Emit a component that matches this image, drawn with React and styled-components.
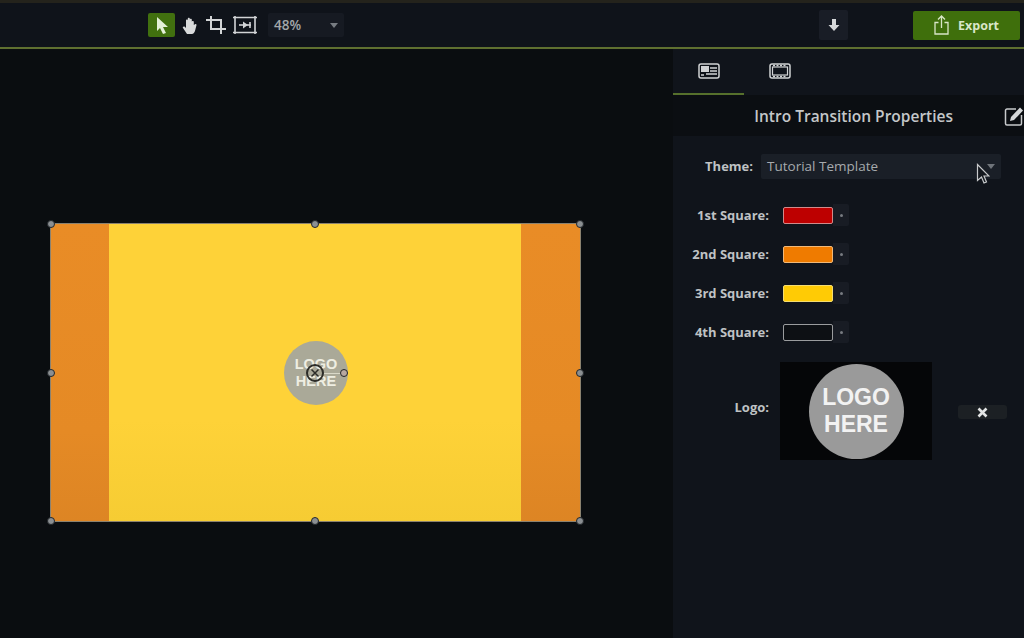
import React from 'react';
import styled, {createGlobalStyle} from 'styled-components';

const GlobalStyle = createGlobalStyle`
  html, body {
    margin: 0;
    padding: 0;
    background: #0a0d10;
    font-family: 'Open Sans', 'Liberation Sans', sans-serif;
  }
`;

const Page = styled.div`
  position: relative;
  width: 1024px;
  height: 638px;
  display: flex;
  flex-direction: column;
  overflow: hidden;
  background: #0a0d10;
  border-top: 3px solid #24231c;
  box-sizing: border-box;
`;

const Toolbar = styled.div`
  height: 46px;
  flex: none;
  box-sizing: border-box;
  display: flex;
  align-items: center;
  background: #0f131a;
  border-bottom: 2px solid #5f7030;
  padding-left: 148px;
  padding-right: 4px;
`;

const ToolGroup = styled.div`
  display: flex;
  align-items: center;
  gap: 7px;
`;

const ToolButton = styled.div`
  width: ${props => props.size || 24}px;
  height: 24px;
  display: flex;
  align-items: center;
  justify-content: center;
  border-radius: 2px;
  background: ${props => (props.active ? '#41700f' : 'transparent')};
`;

const ZoomSelect = styled.div`
  width: 76px;
  height: 24px;
  margin-left: 11px;
  padding: 0 6px;
  box-sizing: border-box;
  display: flex;
  align-items: center;
  justify-content: space-between;
  background: #161a22;
  border-radius: 2px;
  color: #a3a7aa;
  font-size: 13.5px;
  font-weight: 600;
`;

const Caret = styled.span`
  width: 0;
  height: 0;
  border-left: 4px solid transparent;
  border-right: 4px solid transparent;
  border-top: 5px solid #777c82;
`;

const DownloadButton = styled.div`
  width: 29px;
  height: 30px;
  margin-left: auto;
  display: flex;
  align-items: center;
  justify-content: center;
  background: #191d26;
  border-radius: 2px;
`;

const ExportButton = styled.div`
  width: 107px;
  height: 29px;
  margin-left: 65px;
  display: flex;
  align-items: center;
  justify-content: center;
  gap: 9px;
  background: #3f6f0c;
  border-radius: 2px;
  color: #d9e6c8;
  font-size: 12.5px;
  font-weight: 700;
`;

const Main = styled.div`
  flex: 1;
  display: flex;
  min-height: 0;
`;

const Canvas = styled.div`
  width: 673px;
  flex: none;
  padding: 175px 0 0 51px;
  box-sizing: border-box;
  background: #0a0d10;
`;

const Stage = styled.div`
  position: relative;
  width: 529px;
  height: 297px;
  display: flex;
  background: linear-gradient(180deg, #fed238 0%, #fed238 66%, #f6cc33 100%);
  box-shadow: 0 0 0 1px #8b8270;
`;

const SideBar = styled.div`
  width: ${props => props.width}px;
  margin-left: ${props => props.offset || 0}px;
  background: linear-gradient(180deg, #e98c26 0%, #e58a25 70%, #dd8524 100%);
`;

const Handle = styled.span`
  position: absolute;
  left: ${props => props.x}px;
  top: ${props => props.y}px;
  width: 8px;
  height: 8px;
  margin: -4px 0 0 -4px;
  box-sizing: border-box;
  border-radius: 50%;
  background: ${props => props.fill || '#8b8f92'};
  border: 1.5px solid #22262a;
`;

const StageLogo = styled.div`
  position: absolute;
  left: 233px;
  top: 117px;
  width: 64px;
  height: 64px;
  display: flex;
  align-items: center;
  justify-content: center;
  border-radius: 50%;
  background: #aaa998;
  color: #eeeee2;
  font-family: 'Liberation Sans', sans-serif;
  font-size: 14.5px;
  font-weight: 700;
  line-height: 17px;
  text-align: center;
`;

const CenterHandle = styled.div`
  position: absolute;
  left: 255px;
  top: 140px;
  width: 18px;
  height: 18px;
  box-sizing: border-box;
  display: flex;
  align-items: center;
  justify-content: center;
  border: 2px solid #2c2c28;
  border-radius: 50%;
`;

const RotateArm = styled.span`
  position: absolute;
  left: 273px;
  top: 149px;
  width: 17px;
  height: 1px;
  background: #d9d8c8;
`;

const Panel = styled.div`
  flex: 1;
  display: flex;
  flex-direction: column;
  background: #10141b;
  color: #c9cccf;
`;

const Tabs = styled.div`
  height: 46px;
  flex: none;
  display: flex;
`;

const Tab = styled.div`
  width: 71px;
  display: flex;
  align-items: center;
  justify-content: center;
  padding-bottom: 1px;
  box-sizing: border-box;
  border-bottom: 2px solid ${props => (props.active ? '#56702c' : 'transparent')};
`;

const PanelHeader = styled.div`
  height: 41px;
  flex: none;
  display: flex;
  align-items: center;
  justify-content: flex-end;
  gap: 51px;
  background: #0b0e12;
`;

const PanelTitle = styled.div`
  color: #c4c7c9;
  font-size: 15.5px;
  font-weight: 600;
`;

const EditIcon = styled.div`
  width: 20px;
  height: 20px;
  display: flex;
  align-items: center;
`;

const ThemeRow = styled.div`
  display: flex;
  align-items: center;
  height: 26px;
  margin-top: 17px;
  padding-left: 31px;
`;

const FieldLabel = styled.div`
  width: ${props => props.width || 96}px;
  flex: none;
  padding-bottom: ${props => props.lift || 0}px;
  text-align: right;
  color: #bfc2c4;
  font-size: 13px;
  font-weight: 700;
  white-space: nowrap;
`;

const ThemeSelect = styled.div`
  width: 240px;
  height: 25px;
  margin-left: 8px;
  padding: 0 6px;
  box-sizing: border-box;
  display: flex;
  align-items: center;
  justify-content: space-between;
  background: #1a1f27;
  border-radius: 2px;
  color: #a6aaad;
  font-size: 13.5px;
`;

const ThemeCaret = styled(Caret)`
  border-top-color: #6f747a;
`;

const Squares = styled.div`
  display: flex;
  flex-direction: column;
  gap: 15px;
  margin-top: 24px;
`;

const SquareRow = styled.div`
  display: flex;
  align-items: center;
  height: 24px;
`;

const Swatch = styled.div`
  width: 50px;
  height: 17px;
  margin-left: 14px;
  box-sizing: border-box;
  border: 1.5px solid ${props => props.border};
  border-radius: 2px;
  background: ${props => props.color};
`;

const SwatchMenu = styled.div`
  width: 16px;
  height: 22px;
  display: flex;
  align-items: center;
  justify-content: center;
  background: #181c24;
  border-radius: 0 2px 2px 0;
  &::after {
    content: '';
    width: 3px;
    height: 3px;
    border-radius: 50%;
    background: #777b80;
  }
`;

const LogoRow = styled.div`
  display: flex;
  align-items: center;
  margin-top: 18px;
`;

const LogoWell = styled.div`
  width: 152px;
  height: 98px;
  margin-left: 11px;
  display: flex;
  align-items: center;
  justify-content: center;
  background: #050608;
`;

const LogoCircle = styled.div`
  width: 95px;
  height: 95px;
  display: flex;
  align-items: center;
  justify-content: center;
  border-radius: 50%;
  background: #9a9a9a;
  color: #f2f2f2;
  font-family: 'Liberation Sans', sans-serif;
  font-size: 23px;
  font-weight: 700;
  line-height: 27px;
  text-align: center;
`;

const ClearButton = styled.div`
  width: 49px;
  height: 14px;
  margin-left: 26px;
  margin-top: 2px;
  display: flex;
  align-items: center;
  justify-content: center;
  background: #1c2024;
  border-radius: 3px;
`;

const CursorIcon = styled.svg`
  position: absolute;
  left: 976px;
  top: 160px;
`;

const squares = [
  {label: '1st Square:', color: '#bd0000', border: '#d08a8a'},
  {label: '2nd Square:', color: '#ef7b00', border: '#f0b878'},
  {label: '3rd Square:', color: '#ffcb05', border: '#f5dc70'},
  {label: '4th Square:', color: '#0d1014', border: '#9a9c9e'},
];

const handles = [
  [0, 0],
  [264, 0],
  [529, 0],
  [0, 149],
  [529, 149],
  [0, 297],
  [264, 297],
  [529, 297],
];

const ArrowIcon = () => (
  <svg width="16" height="19" viewBox="0 0 16 19">
    <path d="M3 1l11 10h-5l3 6-3 1-3-6-3 3z" fill="#e4f0d8" />
  </svg>
);

const HandIcon = () => (
  <svg width="17" height="17" viewBox="0 0 17 17">
    <path
      d="M5 17L1 11c-.8-1.200.8-2.200 1.800-1.200L4 11V3.500c0-1.300 1.800-1.300 1.800 0V8V1.800c0-1.300 2-1.300 2 0V8V2.800c0-1.300 2-1.300 2 0V8.500V5c0-1.300 2-1.300 2 0v3l1.200-.8c1-.6 2 .4 1.400 1.400L13 14c-.8 2-1.800 3-3 3z"
      fill="#d8dadb"
    />
  </svg>
);

const CropIcon = () => (
  <svg width="20" height="18" viewBox="0 0 20 18" fill="none" stroke="#d2d4d6" strokeWidth="2">
    <path d="M5 0v13h15M0 4h15v14" />
  </svg>
);

const FitIcon = () => (
  <svg width="24" height="20" viewBox="0 0 24 20" fill="none" stroke="#d2d4d6" strokeWidth="1.600">
    <path d="M0 2.500h24M0 17.500h24M2 1v18M22 1v18" />
    <path d="M6 10h12" strokeWidth="1.600" />
    <path d="M10 6.500l5 3.500-5 3.500z" fill="#d2d4d6" stroke="none" />
    <path d="M17 7v6" />
  </svg>
);

const DownArrowIcon = () => (
  <svg width="12" height="13" viewBox="0 0 12 13">
    <path d="M4 0h4v6h3.500L6 12 .5 6H4z" fill="#d6d8da" />
  </svg>
);

const ShareIcon = () => (
  <svg width="15" height="20" viewBox="0 0 15 20" fill="none" stroke="#d9e6c8" strokeWidth="1.300">
    <path d="M4.500 7.500H1v11.500h13V7.500h-3.500M7.500 13V1M4 4.500L7.500 1 11 4.500" />
  </svg>
);

const CaptionIcon = () => (
  <svg width="22" height="16" viewBox="0 0 22 16">
    <rect x="1" y="1" width="20" height="14" rx="2" fill="#0e1218" stroke="#d0d2d4" strokeWidth="1.500" />
    <rect x="3" y="3" width="8" height="6" fill="#d0d2d4" />
    <path d="M12 5h7M12 8h7M8 11h11M3 12h3" stroke="#d0d2d4" strokeWidth="1.300" />
  </svg>
);

const FilmIcon = () => (
  <svg width="22" height="16" viewBox="0 0 22 16">
    <rect x="1" y="1" width="20" height="14" rx="2" fill="none" stroke="#d0d2d4" strokeWidth="1.500" />
    <rect x="3.500" y="4" width="15" height="8" fill="none" stroke="#d0d2d4" strokeWidth="1.200" />
    <path d="M4 2.500h14M4 13.500h14" stroke="#d0d2d4" strokeWidth="1.400" strokeDasharray="2 1.500" />
  </svg>
);

const PencilIcon = () => (
  <svg width="20" height="20" viewBox="0 0 20 20" fill="none">
    <path d="M12 3H3a1.500 1.500 0 0 0-1.500 1.500v13A1.500 1.500 0 0 0 3 19h13a1.500 1.500 0 0 0 1.500-1.500V9" stroke="#c8cacc" strokeWidth="1.500" />
    <path d="M7 11l9-9.500 3 3-9 9.500-4 1z" fill="#d4d6d8" />
  </svg>
);

const App = () => {
  return (
    <>
      <GlobalStyle />
      <Page>
        <Toolbar>
          <ToolGroup>
            <ToolButton size={27} active>
              <ArrowIcon />
            </ToolButton>
            <ToolButton size={17}>
              <HandIcon />
            </ToolButton>
            <ToolButton size={20}>
              <CropIcon />
            </ToolButton>
            <ToolButton size={24}>
              <FitIcon />
            </ToolButton>
          </ToolGroup>
          <ZoomSelect>
            48%
            <Caret />
          </ZoomSelect>
          <DownloadButton>
            <DownArrowIcon />
          </DownloadButton>
          <ExportButton>
            <ShareIcon />
            Export
          </ExportButton>
        </Toolbar>
        <Main>
          <Canvas>
            <Stage>
              <SideBar width={58} />
              <SideBar width={59} offset={412} />
              <StageLogo>
                LOGO
                <br />
                HERE
              </StageLogo>
              <RotateArm />
              <CenterHandle>
                <svg width="10" height="10" viewBox="0 0 10 10">
                  <path d="M1.500 1.500l7 7M8.500 1.500l-7 7" stroke="#2c2c28" strokeWidth="1.500" />
                </svg>
              </CenterHandle>
              <Handle x={293} y={149} fill="#b8a8a0" />
              {handles.map(([x, y]) => (
                <Handle key={`${x}-${y}`} x={x} y={y} />
              ))}
            </Stage>
          </Canvas>
          <Panel>
            <Tabs>
              <Tab active>
                <CaptionIcon />
              </Tab>
              <Tab>
                <FilmIcon />
              </Tab>
            </Tabs>
            <PanelHeader>
              <PanelTitle>Intro Transition Properties</PanelTitle>
              <EditIcon>
                <PencilIcon />
              </EditIcon>
            </PanelHeader>
            <ThemeRow>
              <FieldLabel width={49}>Theme:</FieldLabel>
              <ThemeSelect>
                Tutorial Template
                <ThemeCaret />
              </ThemeSelect>
            </ThemeRow>
            <Squares>
              {squares.map(square => (
                <SquareRow key={square.label}>
                  <FieldLabel>{square.label}</FieldLabel>
                  <Swatch color={square.color} border={square.border} />
                  <SwatchMenu />
                </SquareRow>
              ))}
            </Squares>
            <LogoRow>
              <FieldLabel lift={8}>Logo:</FieldLabel>
              <LogoWell>
                <LogoCircle>
                  LOGO
                  <br />
                  HERE
                </LogoCircle>
              </LogoWell>
              <ClearButton>
                <svg width="11" height="11" viewBox="0 0 11 11">
                  <path d="M1.500 1.500l8 8M9.500 1.500l-8 8" stroke="#e2e4e4" strokeWidth="2.600" />
                </svg>
              </ClearButton>
            </LogoRow>
          </Panel>
        </Main>
        <CursorIcon width="14" height="22" viewBox="0 0 14 22">
          <path d="M1.500 1.500v16l4-3.500 2.500 6 2.500-1-2.500-6h5z" fill="#14181e" stroke="#c8cacc" strokeWidth="1.200" />
        </CursorIcon>
      </Page>
    </>
  );
};

export default App;
